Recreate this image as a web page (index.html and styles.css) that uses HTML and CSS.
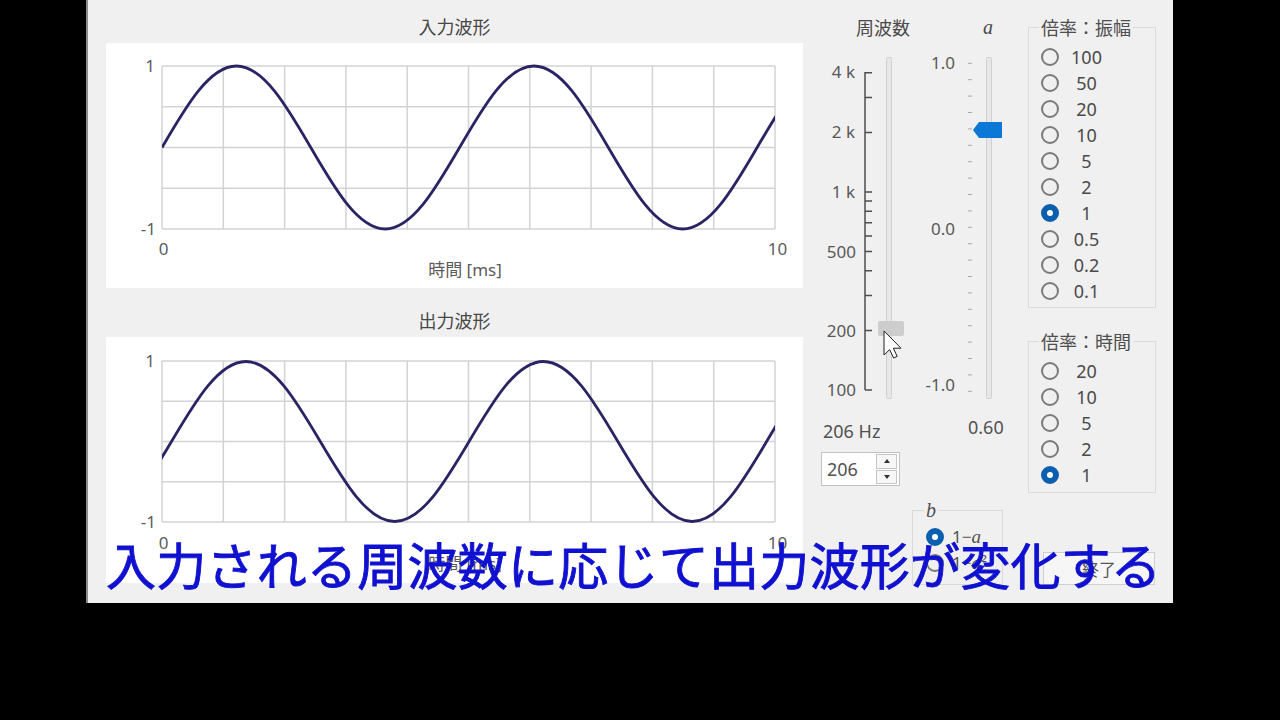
FILE: index.html
```html
<!DOCTYPE html>
<html lang="ja">
<head>
<meta charset="utf-8">
<title>波形ビューア</title>
<link rel="stylesheet" href="styles.css">
</head>
<body>
<div class="window">
  <div class="plots">
    <section class="plot-block">
      <div class="plot-title first">入力波形</div>
      <div class="plot-panel">
        <svg class="plot" width="697" height="245" viewBox="0 0 697 245">
          <defs><clipPath id="clipIn"><rect x="56" y="0" width="613" height="245"/></clipPath></defs>
          <path class="grid" d="M56,23V186M117.3,23V186M178.6,23V186M239.9,23V186M301.2,23V186M362.5,23V186M423.8,23V186M485.1,23V186M546.4,23V186M607.7,23V186M669,23V186M56,23H669M56,63.75H669M56,104.5H669M56,145.25H669M56,186H669"/>
          <path class="wave" clip-path="url(#clipIn)" d="M56,104.5 C80.26,62.75 103.47,23 130.39,23 C157.31,23 180.52,62.75 204.78,104.5 C229.04,146.25 252.25,186 279.17,186 C306.09,186 329.3,146.25 353.56,104.5 C377.82,62.75 401.03,23 427.95,23 C454.87,23 478.08,62.75 502.34,104.5 C526.6,146.25 549.81,186 576.73,186 C603.65,186 626.86,146.25 651.12,104.5 C675.38,62.75 698.59,23 725.51,23"/>
          <text class="tick" x="49" y="29" text-anchor="end">1</text>
          <text class="tick" x="50" y="192" text-anchor="end">-1</text>
          <text class="tick" x="57.5" y="212" text-anchor="middle">0</text>
          <text class="tick" x="671.5" y="212" text-anchor="middle">10</text>
          <text class="axis-label" x="359" y="233" text-anchor="middle">時間 [ms]</text>
        </svg>
      </div>
    </section>
    <section class="plot-block">
      <div class="plot-title second">出力波形</div>
      <div class="plot-panel tall">
        <svg class="plot" width="697" height="246" viewBox="0 0 697 246">
          <defs><clipPath id="clipOut"><rect x="56" y="0" width="613" height="246"/></clipPath></defs>
          <path class="grid" d="M56,24V185M117.3,24V185M178.6,24V185M239.9,24V185M301.2,24V185M362.5,24V185M423.8,24V185M485.1,24V185M546.4,24V185M607.7,24V185M669,24V185M56,24H669M56,64.25H669M56,104.5H669M56,144.75H669M56,185H669"/>
          <path class="wave" clip-path="url(#clipOut)" d="M-8.89,184.5 C18.03,184.5 41.24,145.48 65.5,104.5 C89.76,63.52 112.97,24.5 139.89,24.5 C166.81,24.5 190.02,63.52 214.28,104.5 C238.54,145.48 261.75,184.5 288.67,184.5 C315.59,184.5 338.8,145.48 363.06,104.5 C387.32,63.52 410.53,24.5 437.45,24.5 C464.37,24.5 487.58,63.52 511.84,104.5 C536.1,145.48 559.31,184.5 586.23,184.5 C613.15,184.5 636.36,145.48 660.62,104.5 C684.88,63.52 708.09,24.5 735.01,24.5"/>
          <text class="tick" x="49" y="30" text-anchor="end">1</text>
          <text class="tick" x="50" y="191" text-anchor="end">-1</text>
          <text class="tick" x="57.5" y="212" text-anchor="middle">0</text>
          <text class="tick" x="671.5" y="212" text-anchor="middle">10</text>
          <text class="axis-label" x="359" y="233" text-anchor="middle">時間 [ms]</text>
        </svg>
      </div>
    </section>
  </div>

  <div class="freq-col">
    <div class="col-title freq-title">周波数</div>
    <svg class="scale" width="107" height="350" viewBox="0 0 107 350">
      <rect class="track" x="83.5" y="7.5" width="5" height="341" rx="1"/>
      <path class="axis" d="M62,22V340"/>
      <path class="axis" d="M62,22.8h7M62,47.5h7M62,82.4h7M62,142h7M62,151.1h7M62,161.2h7M62,172.7h7M62,185.9h7M62,201.6h7M62,220.8h7M62,245.5h7M62,280.4h7M62,340h7"/>
      <text class="scale-label" x="52" y="28" text-anchor="end">4 k</text>
      <text class="scale-label" x="52" y="88" text-anchor="end">2 k</text>
      <text class="scale-label" x="52" y="148" text-anchor="end">1 k</text>
      <text class="scale-label" x="53" y="208" text-anchor="end">500</text>
      <text class="scale-label" x="53" y="287" text-anchor="end">200</text>
      <text class="scale-label" x="53" y="346" text-anchor="end">100</text>
      <rect class="thumb-gray" x="75" y="271" width="26" height="15" rx="2"/>
      <path class="cursor" transform="translate(81,281)" d="M0,0 L0,24 L5.6,18.6 L9.6,27 L13.2,25.4 L9.4,17.2 L17,17.2 Z"/>
    </svg>
    <div class="freq-value">206 Hz</div>
    <div class="spinbox">
      <span class="spin-text">206</span>
      <span class="spin-btns">
        <span class="spin-btn"><span class="arrow-up"></span></span>
        <span class="spin-btn"><span class="arrow-down"></span></span>
      </span>
    </div>
  </div>

  <div class="a-col">
    <div class="col-title a-title">a</div>
    <svg class="scale" width="110" height="350" viewBox="0 0 110 350">
      <path class="dash" d="M58,13.3h4M58,29.7h4M58,46.1h4M58,62.5h4M58,78.9h4M58,95.3h4M58,111.7h4M58,128.1h4M58,144.5h4M58,160.9h4M58,177.3h4M58,193.7h4M58,210.1h4M58,226.5h4M58,242.9h4M58,259.3h4M58,275.7h4M58,292.1h4M58,308.5h4M58,324.9h4M58,341.3h4"/>
      <text class="scale-label" x="45" y="19" text-anchor="end">1.0</text>
      <text class="scale-label" x="45" y="185" text-anchor="end">0.0</text>
      <text class="scale-label" x="45" y="341" text-anchor="end">-1.0</text>
      <rect class="track" x="76.5" y="7.5" width="5" height="341" rx="1"/>
      <polygon class="thumb-blue" points="63,80 69,72 92,72 92,88 69,88"/>
    </svg>
    <div class="a-value">0.60</div>
    <fieldset class="group b-group">
      <legend class="math">b</legend>
      <div class="radio-row"><span class="radio on"></span><span class="b-label">1−<i class="math">a</i></span></div>
      <div class="radio-row"><span class="radio"></span><span class="b-label">1−<i class="math">a</i>²</span></div>
    </fieldset>
  </div>

  <div class="radio-col">
    <fieldset class="group amp-group">
      <legend>倍率：振幅</legend>
      <div class="radio-row"><span class="radio"></span><span class="radio-label">100</span></div>
      <div class="radio-row"><span class="radio"></span><span class="radio-label">50</span></div>
      <div class="radio-row"><span class="radio"></span><span class="radio-label">20</span></div>
      <div class="radio-row"><span class="radio"></span><span class="radio-label">10</span></div>
      <div class="radio-row"><span class="radio"></span><span class="radio-label">5</span></div>
      <div class="radio-row"><span class="radio"></span><span class="radio-label">2</span></div>
      <div class="radio-row"><span class="radio on"></span><span class="radio-label">1</span></div>
      <div class="radio-row"><span class="radio"></span><span class="radio-label">0.5</span></div>
      <div class="radio-row"><span class="radio"></span><span class="radio-label">0.2</span></div>
      <div class="radio-row"><span class="radio"></span><span class="radio-label">0.1</span></div>
    </fieldset>
    <fieldset class="group time-group">
      <legend>倍率：時間</legend>
      <div class="radio-row"><span class="radio"></span><span class="radio-label">20</span></div>
      <div class="radio-row"><span class="radio"></span><span class="radio-label">10</span></div>
      <div class="radio-row"><span class="radio"></span><span class="radio-label">5</span></div>
      <div class="radio-row"><span class="radio"></span><span class="radio-label">2</span></div>
      <div class="radio-row"><span class="radio on"></span><span class="radio-label">1</span></div>
    </fieldset>
    <button class="quit">終了</button>
  </div>

  <div class="subtitle">入力される周波数に応じて出力波形が変化する</div>
</div>
</body>
</html>
```

FILE: styles.css
```css
* { box-sizing: border-box; }
html, body { margin: 0; height: 100%; }
body {
  background: #000;
  overflow: hidden;
  font-family: "Noto Sans", "Noto Sans CJK JP", sans-serif;
}
.window {
  position: relative;
  margin-left: 86px;
  width: 1087px;
  height: 603px;
  background: #f0f0f0;
  border-left: 2px solid #8c8c8c;
  display: flex;
  align-items: flex-start;
  color: #525252;
  font-size: 18px;
}
svg { display: block; }

/* plots */
.plots { margin-left: 18px; width: 697px; display: flex; flex-direction: column; }
.plot-title {
  text-align: center;
  line-height: 26px;
  color: #474747;
  font-family: "Noto Sans CJK JP", sans-serif;
  font-size: 18px;
}
.plot-title.first { padding: 13px 0 4px; }
.plot-title.second { padding: 19px 0 4px; }
.plot-panel { background: #fff; height: 245px; }
.plot-panel.tall { height: 246px; }
.grid { fill: none; stroke: #d3d3d3; stroke-width: 1.5; }
.wave { fill: none; stroke: #2a2464; stroke-width: 2.8; stroke-linejoin: round; }
.tick { font-family: "Noto Sans", sans-serif; font-size: 17px; fill: #5c5c5c; }
.axis-label { font-family: "Noto Sans", "Noto Sans CJK JP", sans-serif; font-size: 17px; fill: #5c5c5c; }

/* slider columns */
.freq-col { width: 107px; display: flex; flex-direction: column; }
.a-col { width: 110px; display: flex; flex-direction: column; }
.col-title { height: 50px; padding-top: 15px; line-height: 24px; color: #4a4a4a; }
.freq-title { text-align: right; font-family: "Noto Sans CJK JP", sans-serif; font-size: 18px; }
.a-title { padding-left: 73px; }
.math, .a-title { font-family: "Liberation Serif", serif; font-style: italic; font-size: 20px; }
.track { fill: #e7e7e7; stroke: #d0d0d0; stroke-width: 1; }
.axis { fill: none; stroke: #4e4e4e; stroke-width: 1.5; }
.dash { fill: none; stroke: #a8a8a8; stroke-width: 1; }
.scale-label { font-family: "Noto Sans", sans-serif; font-size: 17px; fill: #585858; }
.thumb-gray { fill: #cdcdcd; }
.thumb-blue { fill: #0a78d4; }
.cursor { fill: #fff; stroke: #222; stroke-width: 1; stroke-linejoin: round; }

.freq-value { margin: 19px 0 0 20px; line-height: 24px; }
.spinbox {
  margin: 9px 0 0 18px;
  width: 79px;
  height: 34px;
  border: 1px solid #c2c2c2;
  background: #fff;
  display: flex;
  align-items: center;
  padding: 2px;
}
.spin-text { flex: 1; padding-left: 3px; line-height: 28px; }
.spin-btns { width: 21px; height: 30px; display: flex; flex-direction: column; gap: 1px; }
.spin-btn {
  flex: 1;
  border: 1px solid #c6c6c6;
  background: #f7f7f7;
  display: flex;
  align-items: center;
  justify-content: center;
}
.arrow-up { width: 0; height: 0; border-left: 3px solid transparent; border-right: 3px solid transparent; border-bottom: 4px solid #333; }
.arrow-down { width: 0; height: 0; border-left: 3px solid transparent; border-right: 3px solid transparent; border-top: 4px solid #333; }

.a-value { margin: 15px 0 0 58px; line-height: 24px; }

/* group boxes */
.group {
  margin: 0;
  min-width: 0;
  border: 1px solid #dadada;
  padding: 6px 8px 3px 10px;
}
.group legend {
  padding: 0 2px;
  line-height: 22px;
  font-family: "Noto Sans CJK JP", sans-serif;
  font-size: 18px;
  color: #4e4e4e;
}
.group legend.math { font-family: "Liberation Serif", serif; font-size: 20px; }
.radio-col { margin-left: 8px; width: 128px; display: flex; flex-direction: column; }
.amp-group { margin-top: 16px; }
.time-group { margin-top: 22px; padding-bottom: 4px; }
.radio-row { display: flex; align-items: center; height: 26px; }
.radio {
  flex: none;
  width: 18px;
  height: 18px;
  margin-left: 2px;
  border-radius: 50%;
  border: 2px solid #7a7a7a;
}
.radio.on { border: 6px solid #0b5fae; background: #fff; }
.radio-label { width: 31px; margin-left: 12px; text-align: center; line-height: 26px; color: #4a4a4a; }
.b-group { margin: 60px 0 0 2px; width: 91px; padding: 3px 6px 8px 11px; }
.b-label { margin-left: 8px; line-height: 26px; font-size: 17px; }
.b-label .math { font-size: 19px; }
.quit {
  margin: 59px 0 0 15px;
  width: 112px;
  height: 33px;
  border: 1px solid #cfcfcf;
  background: #f6f6f6;
  color: #555;
  font-family: "Noto Sans CJK JP", sans-serif;
  font-size: 17px;
  padding: 0;
}

/* caption overlay */
.subtitle {
  position: absolute;
  left: 18px;
  top: 538px;
  font-family: "Noto Sans CJK JP", sans-serif;
  font-size: 50px;
  line-height: 50px;
  letter-spacing: 0.25px;
  color: #1010d0;
  -webkit-text-stroke: 0.9px #1010d0;
  white-space: nowrap;
}
```
